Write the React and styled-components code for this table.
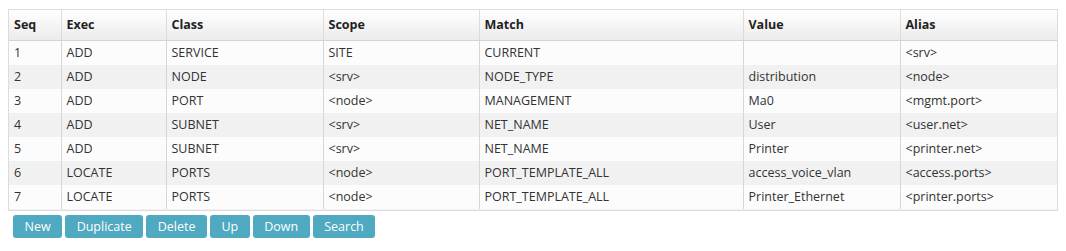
import styled, { createGlobalStyle } from "styled-components";

const GlobalStyle = createGlobalStyle`
    body {
        margin: 0;
        background: #fff;
        font-family: "Open Sans", "Liberation Sans", sans-serif;
        color: #333;
    }
`;

const Page = styled.div`
    padding: 9px 8px 0 8px;
    width: 1050px;
`;

const Grid = styled.div`
    border: 1px solid #dcdcdc;
    height: 200px;
    overflow: hidden;
    background: #f2f2f2;
`;

const Table = styled.table`
    border-collapse: collapse;
    width: 100%;
    table-layout: fixed;
    font-size: 12.5px;
`;

const Th = styled.th`
    box-sizing: border-box;
    text-align: left;
    font-weight: 700;
    font-size: 12.5px;
    height: 30px;
    padding: 0 5px;
    color: #222;
    background: linear-gradient(#ffffff, #ebebeb);
    border-bottom: 1px solid #d4d4d4;
    border-right: 1px solid #dcdcdc;
    width: ${(p) => p.w}px;

    &:last-child {
        border-right: none;
    }
`;

const Row = styled.tr`
    background: ${(p) => (p.odd ? "#fcfcfc" : "#f1f1f1")};
`;

const Td = styled.td`
    height: 24px;
    padding: 0 5px;
    border-right: 1px solid #d6d6d6;
    white-space: nowrap;
    overflow: hidden;

    &:last-child {
        border-right: none;
    }
`;

const Toolbar = styled.div`
    display: flex;
    gap: 3px;
    padding: 4px 0 0 5px;
`;

const Button = styled.button`
    font-family: inherit;
    font-size: 12.5px;
    color: #fff;
    background: #4ea9c1;
    border: none;
    border-radius: 3px;
    height: 23px;
    padding: 0 11.5px;
    cursor: pointer;

    &:hover {
        background: #3f97ae;
    }
`;

const columns = [
    ["Seq", 52],
    ["Exec", 105],
    ["Class", 157],
    ["Scope", 156],
    ["Match", 264],
    ["Value", 157],
    ["Alias", 158],
];

const rows = [
    ["1", "ADD", "SERVICE", "SITE", "CURRENT", "", "<srv>"],
    ["2", "ADD", "NODE", "<srv>", "NODE_TYPE", "distribution", "<node>"],
    ["3", "ADD", "PORT", "<node>", "MANAGEMENT", "Ma0", "<mgmt.port>"],
    ["4", "ADD", "SUBNET", "<srv>", "NET_NAME", "User", "<user.net>"],
    ["5", "ADD", "SUBNET", "<srv>", "NET_NAME", "Printer", "<printer.net>"],
    ["6", "LOCATE", "PORTS", "<node>", "PORT_TEMPLATE_ALL", "access_voice_vlan", "<access.ports>"],
    ["7", "LOCATE", "PORTS", "<node>", "PORT_TEMPLATE_ALL", "Printer_Ethernet", "<printer.ports>"],
];

const buttons = ["New", "Duplicate", "Delete", "Up", "Down", "Search"];

const App = () => {
    return (
        <>
            <GlobalStyle />
            <Page>
                <Grid>
                    <Table>
                        <thead>
                            <tr>
                                {columns.map(([name, w]) => (
                                    <Th key={name} w={w}>{name}</Th>
                                ))}
                            </tr>
                        </thead>
                        <tbody>
                            {rows.map((r, i) => (
                                <Row key={r[0]} odd={i % 2 === 0}>
                                    {r.map((c, j) => (
                                        <Td key={j}>{c}</Td>
                                    ))}
                                </Row>
                            ))}
                        </tbody>
                    </Table>
                </Grid>
                <Toolbar>
                    {buttons.map((b) => (
                        <Button key={b}>{b}</Button>
                    ))}
                </Toolbar>
            </Page>
        </>
    );
};

export default App;
